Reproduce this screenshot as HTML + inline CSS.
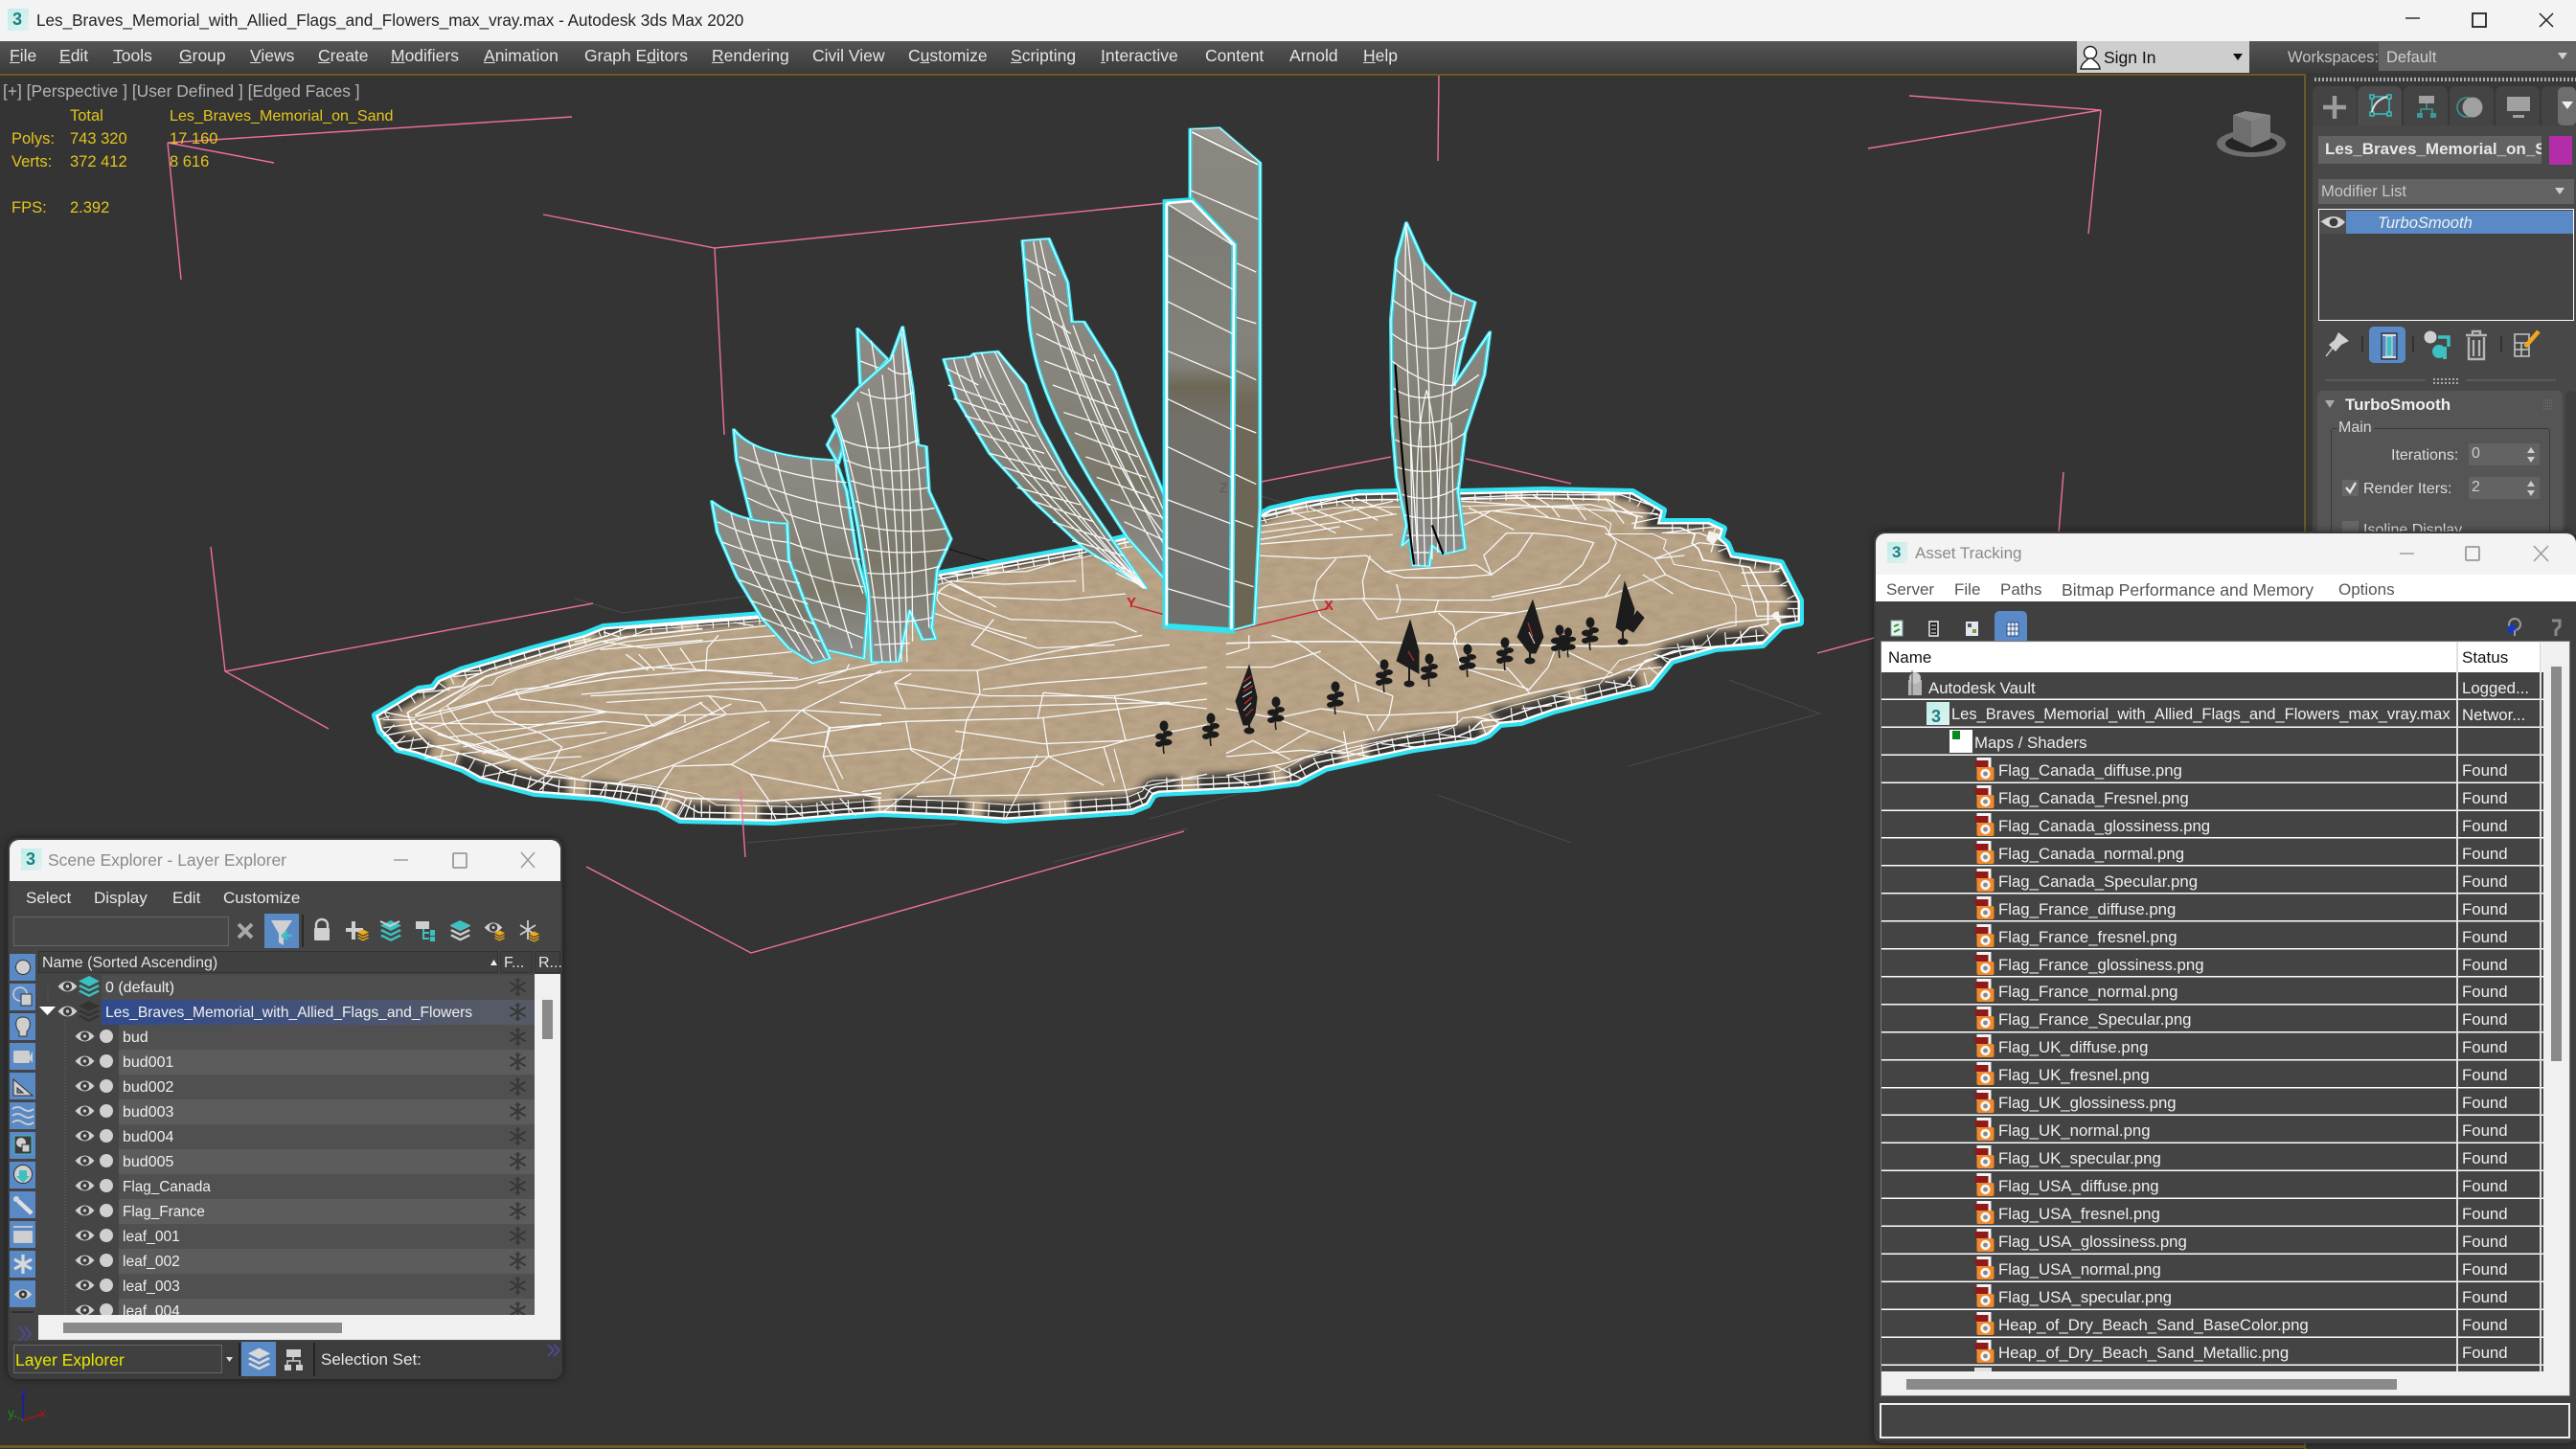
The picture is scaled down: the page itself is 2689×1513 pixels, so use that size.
<!DOCTYPE html>
<html><head><meta charset="utf-8"><title>Autodesk 3ds Max 2020</title>
<style>
html,body{margin:0;padding:0;background:#343434}
body{position:relative;width:2689px;height:1513px;overflow:hidden;font-family:"Liberation Sans",sans-serif;font-size:17px}
.L{position:absolute;left:0;top:0;width:2689px;height:1513px}
.b{position:absolute}
.t{position:absolute;white-space:nowrap;line-height:24px;height:24px}
svg.s3 *{vector-effect:non-scaling-stroke}
.c{fill:url(#lg);stroke:#2fe3f2;stroke-width:7;stroke-linejoin:round}
.w{fill:none;stroke:#fff;stroke-width:1.8;stroke-linejoin:round}
.m{fill:none;stroke:#f8f8f8;stroke-width:1.3}
.r{fill:none;stroke:#fff;stroke-width:1.3}
.m1 .t{color:#e4e4e4;top:46px;font-size:17.5px}
.st{color:#e3c51c;font-size:16.5px}
.vp{color:#b4b4b4;font-size:17.4px}
.ar{position:absolute;color:#f0f0f0;white-space:nowrap;font-size:16.8px;line-height:29px;height:29px;margin-top:1px}
.a{left:2086px}
.f{left:2570px}
.lr{position:absolute;color:#f0f0f0;white-space:nowrap;font-size:16px;line-height:26px;height:26px;left:128px;margin-top:1px}
</style></head><body>
<svg width="0" height="0" style="position:absolute">
<defs>
<linearGradient id="lg" x1="0" y1="0" x2="0" y2="1"><stop offset="0" stop-color="#8f8d86"/><stop offset=".45" stop-color="#85837a"/><stop offset=".7" stop-color="#7b786a"/><stop offset="1" stop-color="#8f8f8e"/></linearGradient>
<linearGradient id="ob" x1="0" y1="0" x2="0" y2="1"><stop offset="0" stop-color="#7b7a74"/><stop offset=".38" stop-color="#83827a"/><stop offset=".435" stop-color="#6d6756"/><stop offset=".5" stop-color="#73706a"/><stop offset="1" stop-color="#6f6f6d"/></linearGradient>
<linearGradient id="ob2" x1="0" y1="0" x2="0" y2="1"><stop offset="0" stop-color="#8a8880"/><stop offset=".45" stop-color="#83827a"/><stop offset=".55" stop-color="#6f6858"/><stop offset="1" stop-color="#6a6453"/></linearGradient>
<linearGradient id="tm" x1="0" y1="0" x2="1" y2="1"><stop offset="0" stop-color="#bfeee8"/><stop offset="1" stop-color="#e0f2f0"/></linearGradient>
<path id="isl" d="M630 655 796 642 977 600 1130 572 1176 561 1311 540 1326 532 1365 523 1418 515 1457 514 1525 514 1612 512 1704 514 1736 533 1733 545 1784 545 1799 552 1796 562 1803 568 1808 580 1859 588 1879 627 1879 650 1859 654 1840 673 1791 677 1745 690 1723 717 1622 742 1588 754 1566 756 1554 767 1539 773 1476 782 1384 802 1355 817 1311 823 1210 828 1204 830 1198 840 1181 847 1106 852 1049 856 994 852 920 849 877 852 808 858 710 856 687 843 627 833 558 828 501 813 483 803 435 787 415 782 397 763 392 747 437 720 452 718 458 710 481 700 555 678 610 663Z"/>
<clipPath id="ic"><use href="#isl"/></clipPath>
<filter id="bl" x="-5%" y="-5%" width="110%" height="110%"><feGaussianBlur stdDeviation="3.5"/></filter>
<filter id="nz" x="0" y="0" width="100%" height="100%"><feTurbulence type="fractalNoise" baseFrequency=".06 .14" numOctaves="3" seed="4"/><feColorMatrix type="matrix" values="0 0 0 0 .25  0 0 0 0 .18  0 0 0 0 .1  1.6 0 0 0 -.55"/></filter>
<symbol id="eye" viewBox="0 0 20 14"><path d="M0 7Q10-4 20 7 10 18 0 7Z" fill="#cfcfcf"/><circle cx="10" cy="7" r="4.6" fill="#3c3c3c"/><circle cx="10" cy="7" r="1.6" fill="#cfcfcf"/></symbol>
<symbol id="flk" viewBox="0 0 20 20"><g stroke="#383838" stroke-width="2.2" fill="none"><path d="M10 0V20M1.5 5 18.5 15M18.5 5 1.5 15"/><path d="M7 2l3 2 3-2M7 18l3-2 3 2" stroke-width="1.3"/></g></symbol>
<symbol id="png" viewBox="0 0 20 24"><rect x="2" y="0" width="15" height="12" fill="#f4f4f4"/><rect y="3" width="14" height="7" fill="#8e1a1a"/><rect x="2" y="10" width="18" height="14" rx="2" fill="#f0892a"/><circle cx="11" cy="17" r="5.2" fill="#f5f5f5"/><circle cx="11" cy="17" r="2.4" fill="#8a8a8a"/></symbol>
<symbol id="fl" viewBox="0 0 20 34"><path d="M10 6C11 16 8 24 10 34" stroke="#1b1b1b" stroke-width="1.6" fill="none"/><ellipse cx="10" cy="5" rx="4.5" ry="5.5" fill="#1b1b1b"/><ellipse cx="7" cy="16" rx="6" ry="3.5" fill="#1b1b1b"/><ellipse cx="14" cy="13" rx="5" ry="3" fill="#1b1b1b"/><ellipse cx="12" cy="22" rx="6.5" ry="3.5" fill="#1b1b1b"/><ellipse cx="5" cy="24" rx="4" ry="3" fill="#1b1b1b"/></symbol>
<symbol id="lay" viewBox="0 0 24 24"><path d="M12 0 24 6 12 12 0 6Z"/><path d="M2 10 12 15 22 10 24 12 12 18 0 12Z"/><path d="M2 16 12 21 22 16 24 18 12 24 0 18Z"/></symbol>
<path id="bA" d="M640 368 688 362 722 490 730 605 752 605 808 750 850 930 905 1140 905 1370 830 1235 770 1085C710 920 655 760 650 560Z"/>
<path id="bC" d="M497 715 545 707 552 698 595 692 645 788 670 900 720 1050 800 1235 865 1385 750 1265 660 1130 580 990 520 830Z"/>
<path id="ob1" d="M945 42 998 38 1072 140 1072 1150 1062 1490 1015 1510 945 250Z"/>
<path id="l1" d="M115 920C135 960 175 1000 300 1010L320 1100 340 1300 360 1420 352 1590 270 1560 200 1400 150 1200 120 1010Z"/>
<path id="l2" d="M75 1130C100 1160 130 1190 212 1195L215 1300 250 1450 290 1590 258 1604 215 1560 165 1470 120 1350 85 1220Z"/>
<path id="l0" d="M340 625 395 715 340 810 320 860 285 965 305 1020 345 790Z"/>
<path id="l3" d="M295 880 340 800 400 715 422 620 440 800 450 965 465 970 470 1100 510 1240 485 1330 475 1500 482 1532 458 1535 435 1450 415 1600 365 1600 360 1400 340 1200 310 950Z"/>
<path id="rl" d="M1338 315 1370 430 1420 520 1463 548 1440 680 1425 790 1490 635 1480 760 1445 930 1432 1100 1445 1270 1405 1285 1385 1260 1380 1320 1350 1318 1345 1240 1330 1260 1338 1200 1320 1060 1312 900 1310 600 1320 420Z"/>
</defs>
</svg>

<!-- 3D viewport -->
<svg class="L s3" viewBox="0 0 2689 1513" width="2689" height="1513" style="background:#343434">
<g stroke="#4a4a4a" stroke-width="1" fill="none">
<path d="M600 735 860 650M600 625 650 640 800 620M640 738 880 800M1000 600 1130 640M1200 555 1300 520M1290 510 1390 540M1700 800 1900 745 1805 710M1500 830 1640 880M1200 855 1430 790M780 880 1000 860M1100 900 1240 865"/>
</g>
<path d="M990 573 1039 588" stroke="#111" stroke-width="1" fill="none"/>
<g stroke="#ef6fa2" stroke-width="1.4" fill="none">
<path d="M175 149 597 122M175 149 286 170M175 149 189 292"/>
<path d="M567 224 746 259 1217 212M746 259 756 454"/>
<path d="M1993 100 2193 115 1950 155M2193 115 2180 244M2154 493 2149 557"/>
<path d="M1502 78 1501 168"/>
<path d="M220 571 235 701 343 761M235 701 619 630"/>
<path d="M612 905 784 995 1236 868"/>
<path d="M1897 682 1960 665M1311 504 1452 477M1530 479 1640 505"/>
</g>

<!-- island -->
<use href="#isl" fill="none" stroke="#2fe3f2" stroke-width="8" stroke-linejoin="round"/>
<use href="#isl" fill="#baa589"/>
<g clip-path="url(#ic)">
<rect x="380" y="500" width="1510" height="370" filter="url(#nz)" opacity=".28"/>
<use href="#isl" fill="none" stroke="#2b2a29" stroke-width="25" stroke-dasharray="75 22 120 30 60 18" filter="url(#bl)" transform="translate(0 -5)" opacity=".9"/>
<use href="#isl" fill="none" stroke="#f4f1ea" stroke-width="26" stroke-dasharray="1.2 15" transform="translate(0 -3)"/>
<use href="#isl" fill="none" stroke="#fff" stroke-width="5"/>
</g>
<g class="r">
<use href="#isl" class="r" style="stroke-width:1.7" transform="translate(1135 685) scale(.955) translate(-1135 -685)"/>
<use href="#isl" class="r" style="stroke-width:1" transform="translate(1135 685) scale(.91) translate(-1135 -685)"/>
<path class="r" style="stroke-width:1.1" d="M977 600 1040 634M1129 573 1131 618M1181 847 1163 782M1049 856 1083 788M920 849 1006 783"/>
</g>
<!-- left mesh traced -->
<g class="m" transform="translate(400 620) scale(.3333)">
<path style="stroke-width:1.8" d="M100 380 320 260 500 205 680 150 760 135 1000 110M100 400 170 435 300 490 420 520 510 570 680 590 840 610 950 640 1200 650 1560 625"/>
<path d="M100 385 320 335 520 295 720 265 1010 240 1300 265M110 395 420 310 620 260 830 230 1220 250M120 405 470 410 690 400 840 415M150 420 340 370 700 370 830 380 940 380 1080 378 1200 368 1320 365 1560 380M170 440 420 520 620 510M200 450 450 420 600 390 700 370M250 480 500 430 690 400M310 500 560 450 700 435"/>
<path d="M420 520 600 480 820 420 1000 340M510 565 700 510 900 440 1070 380M620 575 760 500 930 420 1090 345M740 590 900 540 1090 460 1210 400M860 610 910 540 1090 535 1210 460 1390 480 1440 580M1210 460 1310 365 1560 240M1090 535 1150 565 1210 650M1150 565 1390 610 1560 640M1210 460 1560 405M1400 420 1385 480M1310 365 1400 420 1560 410"/>
<path d="M820 380 845 415 920 380 945 380 945 405M320 335 415 300 520 290M415 300 430 330 600 350 700 370M200 350 320 260M200 350 250 420 420 520M320 335 350 380 500 440 560 480 510 570M1010 240 1015 170 1050 130M930 170 980 240M860 170 910 240M800 190 850 240M760 190 830 240"/>
<path d="M690 150 820 170 1000 150 1240 130M540 205 760 150 1200 100M680 175 1000 145M520 295 700 250 1000 210 1300 180M620 315 1050 280 1300 270 1560 215M650 320 1050 300 1290 295 1450 240 1460 220M700 340 1020 320 1180 340 1200 368M1075 378 1020 320M1040 380 990 340"/>
<path d="M680 630 700 590M720 640 740 590M760 650 790 600M835 665 860 610M870 670 890 615M920 695 950 640M945 700 965 645M997 700 997 645M1200 650 1230 705M1370 650 1410 695M1430 640 1480 695M1260 650 1310 695M50 490 240 470M130 515 340 490M300 575 420 550M320 540 400 520M0 370 100 390M0 395 100 395M0 420 110 405M0 445 130 420M480 175 530 160M600 150 650 140M690 120 740 135M220 260 300 250M240 245 310 240M110 310 210 300M20 470 120 455M450 610 510 570M490 615 530 575M1100 90 1160 100M900 100 960 90"/>
</g>
<!-- center mesh -->
<g class="m" transform="translate(360 500) scale(.574 .3333)">
<path d="M1000 640 1170 680 1400 680 1568 640M1020 720 1260 710 1500 700M1020 760 1260 750 1568 690M1150 600 1240 570 1500 520"/>
<path d="M1020 760 1030 850 1110 930 1100 990M1150 600 1155 670 1130 760 1120 860 1110 930M1270 750 1280 870 1260 900 1100 940 940 980M1260 750 1270 670M1030 845 1120 880 1280 870 1380 840 1400 950M1040 995 1260 990 1420 975 1568 925M1270 670 1420 690 1568 720"/>
<path d="M1100 330 1150 370 1300 380 1420 360M1070 350 1210 440 1400 450 1440 480M1070 420 1160 470 1260 530 1400 520M1100 330C1040 380 1100 440 1240 500M1180 440 1140 520 1210 570 1290 540 1450 490M1100 320 1200 330 1330 320M1090 300 1240 290 1340 240"/>
<path d="M860 640 1000 600 1150 600M1030 610 1000 640 1020 720M900 700 1020 720M880 780 1020 760M870 870 1030 845M880 780 870 870 900 980M1110 790 1270 830 1420 820 1568 770M1280 870 1380 960M1160 660 1260 640 1420 620 1568 590M1400 680 1420 820 1380 840"/>
</g>
<!-- right mesh traced -->
<g class="m" transform="translate(1280 500) scale(.3954 .3333)">
<path d="M80 205 240 190 440 175M80 150 250 120 440 70M620 60 800 50 1040 50 1140 90M620 110 790 90 960 80 1100 120M620 150 700 100 840 120 1000 150 1030 200 1010 260 930 330 700 380 550 380 360 375 230 380 80 405"/>
<path d="M470 310 610 310 700 300 770 240 810 170M420 290 530 280 660 270 700 300 680 240 740 170 810 170 900 180 970 200 940 270 880 330 700 370M80 240 250 250 370 240 420 290 470 310M230 380 240 320 290 250M230 380 250 430 350 510 420 600M360 375 400 440 560 415 760 420 1000 370 1160 300 1130 250 1000 170M560 380 550 420M450 330 460 380 450 420M380 240 360 320 365 375"/>
<path d="M560 420 600 460 610 520M760 420 670 440 610 480 600 510 620 590 740 600M1160 300 1230 340 1390 380 1400 430M1390 380 1360 270M1000 370 1040 300M1100 300 1180 360M810 50 860 90 880 120M1000 60 1050 140M1250 200 1130 250 1210 240"/>
<path style="stroke-width:1.6" d="M0 515 180 510 330 510 520 515 760 520 1000 525 1110 520 1330 450 1510 430"/>
<path d="M0 590 120 590 250 540M120 490 190 515 330 630 440 680M60 490 60 530 0 550M440 680 430 740 400 790M340 640 350 700M250 720 370 740 430 740 610 730M610 730 610 770M620 590 800 660 850 590 870 530M740 590 800 670M880 530 1020 610"/>
<path d="M130 750 220 790 320 830M0 720 130 750 250 720M320 830 440 800 610 770M0 870 200 850 310 860 430 820 610 770M0 930 160 890 320 830M70 820 0 860M70 820 170 880M310 790 320 860M220 790 120 860M370 740 390 790"/>
<path style="stroke-width:1.6" d="M610 730 810 670 1010 620 1180 540 1420 510"/>
<path d="M640 790 720 770M560 800 660 815M410 830 500 840M280 850 380 870M130 900 200 940M20 935 60 960M780 720 860 710M650 745 720 760M860 680 950 690M1000 635 1080 650M1060 600 1150 590M1130 550 1170 565M1200 525 1290 530M1320 500 1420 490M1400 430 1510 430M1390 385 1510 385M1360 335 1480 335M1360 295 1460 290M1250 200 1320 210M1150 170 1290 150"/>
<path d="M100 120 300 60M80 170 330 130 450 110M170 100 290 170M220 90 360 160M300 70 400 130M340 60 440 110M90 190 300 150M620 70 1140 110M1070 140 1150 120M760 50 850 120M900 50 950 130M640 90 760 160M1160 170 1250 170 1290 190 1280 230"/>
</g>
<path d="M773 825 778 895" stroke="#ef6fa2" stroke-width="1.4" fill="none"/>

<!-- flowers and trees -->
<g>
<use href="#fl" x="1205" y="752" width="20" height="36"/>
<use href="#fl" x="1254" y="744" width="20" height="36"/>
<use href="#fl" x="1322" y="727" width="20" height="36"/>
<use href="#fl" x="1384" y="711" width="20" height="36"/>
<use href="#fl" x="1435" y="688" width="20" height="36"/>
<use href="#fl" x="1482" y="682" width="20" height="36"/>
<use href="#fl" x="1522" y="672" width="20" height="36"/>
<use href="#fl" x="1561" y="665" width="20" height="36"/>
<use href="#fl" x="1618" y="652" width="20" height="36"/>
<use href="#fl" x="1628" y="654" width="18" height="34"/>
<use href="#fl" x="1650" y="644" width="20" height="36"/>
</g>
<g fill="#1c1c1c" stroke="#1c1c1c">
<path d="M1304 695 1312 728 1310 745 1304 757 1298 757 1290 732Z"/><path d="M1304 755V762" stroke-width="2"/><ellipse cx="1304" cy="763" rx="5" ry="3"/>
<path d="M1472 648 1458 690 1481 703 1481 680Z"/><path d="M1471 690V713" stroke-width="2"/><ellipse cx="1471" cy="714" rx="5" ry="3"/>
<path d="M1600 627 1584 665 1597 682 1603 682 1611 665Z"/><path d="M1597 680V688" stroke-width="2"/><ellipse cx="1597" cy="690" rx="5" ry="3"/>
<path d="M1696 608 1687 655 1694 660 1704 650 1706 636Z"/><path d="M1694 658V669" stroke-width="2"/><ellipse cx="1694" cy="670" rx="5" ry="3"/>
<path d="M1709 638 1716 645 1705 660 1698 656Z"/>
</g>
<g stroke="#c03030" stroke-width="1.2" fill="none"><path d="M1298 712 1306 706M1298 722 1308 716M1299 735 1307 728M1300 748 1308 740M1470 680 1476 690M1595 650 1600 665"/></g>
<g stroke="#dddddd" stroke-width="1.1" fill="none"><path d="M1298 718 1306 712M1297 728 1307 722M1298 742 1306 734M1596 660 1602 672"/></g>

<!-- axis gizmo -->
<path d="M1183 633 1283 660 1387 635" stroke="#d01f2a" stroke-width="1.4" fill="none"/>
<path d="M1279 510V660" stroke="#5a5a5a" stroke-width="1"/>

<!-- blades center -->
<g transform="translate(700 120) scale(.574 .357)">
<use href="#bA" class="c"/>
<g class="m"><path d="M660 370C680 600 760 950 905 1330M672 366C700 600 790 950 905 1280M712 615C760 850 830 1100 905 1240M732 615C780 830 850 1060 905 1210M770 700C820 900 870 1050 905 1190"/>
<path d="M645 420 700 470M648 480 722 560M655 560 728 640M665 640 770 720M680 720 800 790M695 790 815 860M715 870 830 930M735 930 850 1000M755 1000 865 1060M775 1060 880 1120M800 1125 900 1180M825 1190 905 1250"/></g>
<use href="#bA" class="w"/>
<use href="#bC" class="c"/>
<g class="m"><path d="M515 715C540 880 640 1100 860 1385M535 712C570 900 670 1120 862 1385M565 695C610 880 690 1100 864 1385M590 695C640 860 720 1120 865 1385M555 705C600 880 680 1100 860 1380"/>
<path d="M500 740 560 790M505 790 610 850M515 830 650 900M535 880 665 940M555 930 680 990M580 990 700 1040M605 1030 720 1090M630 1090 745 1140M660 1130 770 1190M695 1190 800 1245M730 1245 825 1290M770 1290 845 1340M810 1340 860 1380M552 698 565 770M595 692 645 788"/></g>
<use href="#bC" class="w"/>
</g>

<!-- obelisk -->
<g transform="translate(700 120) scale(.574 .357)">
<use href="#ob1" fill="url(#ob2)" stroke="#2fe3f2" stroke-width="7"/>
<path d="M945 42 998 38 1072 140Z" fill="#9a9890"/>
<path d="M948 50 1068 145" stroke="#fff" stroke-width="1.6" fill="none"/>
<g class="m"><path d="M945 220 1068 305M1025 430 1065 460M1025 590 1065 610M1025 745 1065 775M1025 905 1065 930M1025 1050 1065 1080M1025 1185 1060 1205M1020 1360 1060 1380"/></g>
<use href="#ob1" class="w"/>
<path d="M900 255 948 250 1025 380 1020 1508 900 1495Z" fill="url(#ob)" stroke="#2fe3f2" stroke-width="6"/>
<path d="M903 258 948 252 1025 380Z" fill="#a09e97"/>
<g class="m"><path d="M903 260 1022 380M903 410 1022 510M903 545 1022 640M903 690 1022 770M903 830 1020 920M903 970 1020 1060M903 1125 1018 1195M903 1265 1018 1330M903 1385 1018 1440"/></g>
<path d="M902 258 948 252 1025 380 1020 1505" fill="none" stroke="#fff" stroke-width="2.6"/>
<path d="M902 258V1495" fill="none" stroke="#fff" stroke-width="2.6"/>
<path d="M900 1497 1015 1510" fill="none" stroke="#2fe3f2" stroke-width="3"/>
</g>

<!-- left leaves -->
<g transform="translate(700 120) scale(.574 .357)">
<use href="#l1" class="c"/>
<g class="m"><path d="M125 1000Q220 1060 320 1075M132 1060Q230 1130 330 1150M140 1120Q230 1190 335 1215M215 1250Q280 1290 345 1300M225 1330Q290 1370 350 1380M240 1410Q300 1440 355 1460M255 1470 350 1530M150 965Q170 1100 215 1195M190 990Q220 1200 290 1500M255 1005Q270 1250 330 1560M300 1010Q305 1200 350 1400"/></g>
<use href="#l1" class="w"/>
<use href="#l2" class="c"/>
<g class="m"><path d="M85 1190Q150 1240 213 1250M95 1250Q160 1290 220 1310M110 1310Q170 1350 235 1370M125 1360Q190 1400 250 1430M145 1420Q200 1450 262 1490M165 1470Q210 1500 272 1540M110 1165Q130 1320 235 1568M140 1178Q165 1350 258 1590M178 1190Q190 1350 280 1590"/></g>
<use href="#l2" class="w"/>
<use href="#l0" class="c"/>
<path d="M365 660 375 760M345 720 395 750" class="m"/>
<use href="#l0" class="w"/>
<use href="#l3" class="c"/>
<g class="m"><path d="M300 885Q350 1100 385 1600M340 840Q380 1100 400 1600M385 760Q410 1100 420 1600M420 640Q440 1100 440 1540M422 620Q455 1000 470 1500M360 800Q395 1100 410 1600M405 700Q425 1100 430 1600"/>
<path d="M312 950Q380 1000 452 950M320 1010Q390 1060 465 1030M328 1070Q400 1110 470 1090M336 1130Q410 1170 480 1150M345 1200Q420 1230 500 1210M352 1270Q420 1290 505 1270M358 1340Q420 1350 490 1320M365 1410Q420 1420 480 1400M370 1480Q420 1490 478 1470M345 810Q400 850 442 810M395 740Q420 770 438 750M370 1550 435 1545"/></g>
<use href="#l3" class="w"/>
</g>

<!-- right leaves -->
<g transform="translate(700 120) scale(.574 .357)">
<use href="#rl" class="c"/>
<g class="m"><path d="M1338 315Q1330 600 1360 1318M1338 330Q1360 600 1372 1320M1370 430Q1380 700 1385 1300M1420 520Q1400 800 1395 1280M1445 540Q1410 800 1410 1280M1345 900 1350 1310M1420 900 1425 1280"/>
<path d="M1318 450Q1370 530 1440 560M1312 540Q1380 620 1452 600M1312 640Q1380 720 1445 650M1312 720Q1380 800 1428 790M1315 800Q1380 870 1470 760M1315 880Q1380 930 1450 860M1318 950Q1380 1000 1445 930M1320 1030Q1380 1060 1435 1020M1330 1110Q1380 1140 1432 1090M1335 1170Q1380 1190 1432 1170M1338 1230 1440 1230M1350 1280 1380 1280"/>
<path d="M1375 805Q1350 950 1360 1300M1375 805Q1400 950 1395 1280"/></g>
<use href="#rl" class="w"/>
<path d="M1318 730C1325 900 1335 1120 1352 1315" stroke="#000" stroke-width="2.2" fill="none"/>
<path d="M1385 1200 1405 1285" stroke="#000" stroke-width="2.2" fill="none"/>
</g>

<!-- nav cube -->
<ellipse cx="2350" cy="150" rx="36" ry="14" fill="#6f6f6f"/>
<ellipse cx="2350" cy="150" rx="27" ry="9" fill="#252525"/>
<path d="M2331 120 2344 116 2370 120 2350 127Z" fill="#848484"/>
<path d="M2331 120 2350 127V154L2331 145Z" fill="#6e6e6e"/>
<path d="M2350 127 2370 120V145L2350 154Z" fill="#7c7c7c"/>

<!-- tripod -->
<path d="M24 1483V1456" stroke="#1a1ab0" stroke-width="1.5"/>
<path d="M24 1483 46 1476" stroke="#a01818" stroke-width="1.5"/>
<path d="M24 1483 12 1477" stroke="#1c8a1c" stroke-width="1.5" stroke-dasharray="2 2"/>
<rect x="0" y="77" width="2407" height="2" fill="#6c5a24"/>
<rect x="2405" y="77" width="2" height="1436" fill="#6c5a24"/>
<rect x="0" y="1509" width="2407" height="3" fill="#6c5a24"/>
</svg>
<div class="t" style="left:1176px;top:618px;color:#c8202a;font-size:15px;font-weight:bold">Y</div>
<div class="t" style="left:1382px;top:621px;color:#c8202a;font-size:15px;font-weight:bold">X</div>
<div class="t" style="left:1273px;top:497px;color:#5c5c5c;font-size:14px">Z</div>
<div class="t" style="left:21px;top:1443px;color:#1a1ab0;font-size:14px">z</div>
<div class="t" style="left:8px;top:1463px;color:#1c8a1c;font-size:14px">y</div>
<div class="t" style="left:41px;top:1463px;color:#a01818;font-size:14px">x</div>

<!-- title bar -->
<div class="b" style="left:0;top:0;width:2689px;height:43px;background:#f3f3f3"></div>
<svg class="L" viewBox="0 0 2689 44" style="height:44px;width:2689px">
<rect x="8" y="9" width="22" height="23" fill="url(#tm)"/>
<path d="M2511 19H2526" stroke="#222" stroke-width="1.4"/>
<rect x="2581" y="14" width="14" height="14" fill="none" stroke="#222" stroke-width="1.8"/>
<path d="M2651 14 2665 28M2665 14 2651 28" stroke="#222" stroke-width="1.5"/>
</svg>
<div class="t" style="left:13px;top:8px;color:#1d7f86;font-weight:bold;font-size:18px">3</div>
<div class="t" style="left:38px;top:9px;font-size:17.14px;color:#222">Les_Braves_Memorial_with_Allied_Flags_and_Flowers_max_vray.max - Autodesk 3ds Max 2020</div>

<!-- menu bar -->
<div class="b" style="left:0;top:43px;width:2689px;height:34px;background:linear-gradient(#555,#3a3a3a)"></div>
<div class="m1">
<div class="t" style="left:10px"><u>F</u>ile</div>
<div class="t" style="left:62px"><u>E</u>dit</div>
<div class="t" style="left:118px"><u>T</u>ools</div>
<div class="t" style="left:187px"><u>G</u>roup</div>
<div class="t" style="left:261px"><u>V</u>iews</div>
<div class="t" style="left:332px"><u>C</u>reate</div>
<div class="t" style="left:408px"><u>M</u>odifiers</div>
<div class="t" style="left:505px"><u>A</u>nimation</div>
<div class="t" style="left:610px">Graph E<u>d</u>itors</div>
<div class="t" style="left:743px"><u>R</u>endering</div>
<div class="t" style="left:848px">Civil View</div>
<div class="t" style="left:948px">C<u>u</u>stomize</div>
<div class="t" style="left:1055px"><u>S</u>cripting</div>
<div class="t" style="left:1149px"><u>I</u>nteractive</div>
<div class="t" style="left:1258px">Content</div>
<div class="t" style="left:1346px">Arnold</div>
<div class="t" style="left:1423px"><u>H</u>elp</div>
</div>
<div class="b" style="left:2168px;top:43px;width:180px;height:33px;background:#cecece"></div>
<svg class="b" style="left:2170px;top:46px" width="24" height="28" viewBox="0 0 24 28"><circle cx="12" cy="9" r="6.5" fill="#fff" stroke="#222" stroke-width="1.5"/><path d="M2 26C3 19 8 18 10 15H14C16 18 21 19 22 26Z" fill="#fff" stroke="#222" stroke-width="1.5"/></svg>
<div class="t" style="left:2196px;top:48px;color:#111;font-size:17.5px">Sign In</div>
<div class="b" style="left:2331px;top:56px;width:0;height:0;border-left:5px solid transparent;border-right:5px solid transparent;border-top:7px solid #111"></div>
<div class="t" style="left:2388px;top:48px;color:#c4c4c4;font-size:16.5px">Workspaces:</div>
<div class="b" style="left:2483px;top:44px;width:206px;height:30px;background:#646464"></div>
<div class="t" style="left:2491px;top:48px;color:#cfcfcf;font-size:16.5px">Default</div>
<div class="b" style="left:2670px;top:55px;width:0;height:0;border-left:5px solid transparent;border-right:5px solid transparent;border-top:7px solid #d0d0d0"></div>

<!-- viewport text -->
<div class="t vp" style="left:3px;top:83px">[+] [Perspective ] [User Defined ] [Edged Faces ]</div>
<div class="t st" style="left:73px;top:109px">Total</div>
<div class="t st" style="left:177px;top:109px;font-size:16.1px">Les_Braves_Memorial_on_Sand</div>
<div class="t st" style="left:12px;top:133px">Polys:</div>
<div class="t st" style="left:73px;top:133px">743 320</div>
<div class="t st" style="left:177px;top:133px">17 160</div>
<div class="t st" style="left:12px;top:157px">Verts:</div>
<div class="t st" style="left:73px;top:157px">372 412</div>
<div class="t st" style="left:177px;top:157px">8 616</div>
<div class="t st" style="left:12px;top:205px">FPS:</div>
<div class="t st" style="left:73px;top:205px">2.392</div>

<!-- right command panel -->
<div class="L" style="clip-path:inset(78px 0 953px 2407px)">
<div class="b" style="left:2407px;top:78px;width:282px;height:480px;background:#383838"></div>
<div class="b" style="left:2416px;top:81px;width:273px;height:4px;background:repeating-linear-gradient(90deg,#aaa 0,#aaa 2px,#383838 2px,#383838 4px)"></div>
<div class="b" style="left:2414px;top:90px;width:46px;height:41px;background:#444;border-radius:7px 7px 0 0"></div>
<div class="b" style="left:2461px;top:90px;width:46px;height:41px;background:#4c4c4c;border-radius:7px 7px 0 0"></div>
<div class="b" style="left:2509px;top:90px;width:46px;height:41px;background:#444;border-radius:7px 7px 0 0"></div>
<div class="b" style="left:2557px;top:90px;width:46px;height:41px;background:#444;border-radius:7px 7px 0 0"></div>
<div class="b" style="left:2605px;top:90px;width:46px;height:41px;background:#444;border-radius:7px 7px 0 0"></div>
<div class="b" style="left:2653px;top:90px;width:36px;height:41px;background:#444;border-radius:7px 7px 0 0"></div>
<div class="b" style="left:2670px;top:91px;width:19px;height:40px;background:#6e6e6e;border-radius:5px"></div>
<div class="b" style="left:2414px;top:131px;width:275px;height:427px;background:#484848"></div>
<div class="b" style="left:2420px;top:142px;width:233px;height:29px;background:#636363;overflow:hidden"><div class="t" style="left:7px;top:2px;color:#e8e8e8;font-weight:bold;font-size:17px">Les_Braves_Memorial_on_Sand</div></div>
<div class="b" style="left:2661px;top:142px;width:24px;height:30px;background:#b42da8"></div>
<div class="b" style="left:2420px;top:187px;width:267px;height:26px;background:#636363"></div>
<div class="t" style="left:2423px;top:188px;color:#c8c8c8;font-size:16.5px">Modifier List</div>
<div class="b" style="left:2667px;top:196px;width:0;height:0;border-left:5px solid transparent;border-right:5px solid transparent;border-top:7px solid #d0d0d0"></div>
<div class="b" style="left:2420px;top:218px;width:265px;height:115px;background:#444;border:1.5px solid #fff"></div>
<div class="b" style="left:2422px;top:220px;width:27px;height:24px;background:#4e4e4e"></div>
<div class="b" style="left:2449px;top:220px;width:237px;height:24px;background:#5a8ac6"></div>
<div class="t" style="left:2482px;top:221px;color:#f0f0f0;font-style:italic;font-size:16.5px">TurboSmooth</div>
<div class="b" style="left:2473px;top:341px;width:38px;height:38px;background:#5a8ac6;border-radius:5px"></div>
<div class="b" style="left:2419px;top:408px;width:256px;height:150px;background:#555;border-radius:5px 5px 0 0"></div>
<div class="b" style="left:2678px;top:408px;width:11px;height:150px;background:#404040;border-radius:5px"></div>
<div class="b" style="left:2433px;top:447px;width:227px;height:120px;border:1.5px solid #3a3a3a;border-radius:3px"></div>
<div class="b" style="left:2440px;top:438px;width:38px;height:18px;background:#555"></div>
<div class="b" style="left:2577px;top:463px;width:74px;height:23px;background:#636363"></div>
<div class="b" style="left:2577px;top:498px;width:74px;height:23px;background:#636363"></div>
<div class="b" style="left:2445px;top:501px;width:17px;height:17px;background:#666"></div>
<div class="b" style="left:2445px;top:544px;width:17px;height:17px;background:#666"></div>
<svg class="L" viewBox="0 0 2689 1513" width="2689" height="1513">
<path d="M2425 112H2449M2437 100V124" stroke="#9c9c9c" stroke-width="4.5"/>
<g fill="none" stroke="#3cc0c0" stroke-width="1.5"><rect x="2474" y="99" width="4" height="4"/><rect x="2492" y="99" width="4" height="4"/><rect x="2474" y="117" width="4" height="4"/><rect x="2492" y="117" width="4" height="4"/><path d="M2478 101H2492M2478 119H2492M2476 103V117M2494 103V117"/></g>
<path d="M2476 117C2478 108 2484 103 2492 101" stroke="#ddd" stroke-width="2" fill="none"/>
<rect x="2525" y="100" width="16" height="8" fill="#a0a0a0"/><path d="M2533 108V114M2527 118V114H2539V118" stroke="#3a9a9a" stroke-width="1.6" fill="none"/><rect x="2523" y="118" width="6" height="5" fill="#3a9a9a"/><rect x="2537" y="118" width="6" height="5" fill="#3a9a9a"/>
<circle cx="2575" cy="112" r="10" fill="none" stroke="#3a9a9a" stroke-width="1.5"/><circle cx="2581" cy="112" r="10.5" fill="#a0a0a0"/>
<rect x="2617" y="101" width="24" height="15" fill="#a0a0a0"/><rect x="2623" y="120" width="12" height="3" fill="#a0a0a0"/>
<path d="M2674 106H2686L2680 114Z" fill="#f0f0f0"/>
<path d="M2422 232Q2437 220 2448 232 2437 244 2424 232Z" fill="#d4d4d4"/><circle cx="2436" cy="232" r="4.4" fill="#3c3c3c"/>
<path d="M2428 372 2436 362" stroke="#c0c0c0" stroke-width="1.6"/><path d="M2441 347 2452 356 2444 360 2438 367 2431 360 2437 355Z" fill="#d0d0d0"/>
<path d="M2466 351V368M2519 351V368M2611 351V368" stroke="#2a2a2a" stroke-width="1.5"/>
<rect x="2486" y="348" width="16" height="27" fill="none" stroke="#2a2a2a" stroke-width="1.2"/><rect x="2491" y="351" width="6" height="21" fill="#3cc0c0" stroke="#ddd" stroke-width="1"/><path d="M2487 350H2501M2487 373H2501" stroke="#ddd" stroke-width="2"/>
<circle cx="2537" cy="352" r="6.5" fill="#cfcfcf"/><path d="M2545 352H2556V362" fill="none" stroke="#3cc0c0" stroke-width="3.5"/><circle cx="2546" cy="367" r="7" fill="#3cc0c0"/><path d="M2552 362V375" stroke="#3cc0c0" stroke-width="4"/>
<path d="M2574 350H2596M2581 350V346H2589V350M2577 352V375H2593V352M2582 355V372M2588 355V372" fill="none" stroke="#b4b4b4" stroke-width="2.4"/>
<path d="M2625 349H2640V372H2625ZM2625 358H2640M2625 365H2640M2632 358V372" fill="none" stroke="#c4c4c4" stroke-width="1.6"/><path d="M2636 362 2650 346" stroke="#f0a818" stroke-width="4.5"/>
<path d="M2427 397H2532M2574 397H2668" stroke="#606060" stroke-width="1.5"/>
<path d="M2540 396H2566M2540 400H2566" stroke="#c8c8c8" stroke-width="1.6" stroke-dasharray="2 2"/>
<path d="M2427 418H2437L2432 426Z" fill="#aaa"/>
<path d="M2655 418H2664M2655 421H2664M2655 424H2664M2655 427H2664" stroke="#777" stroke-width="1" stroke-dasharray="1 1"/>
<path d="M2638 473 2642 467 2646 473ZM2638 477 2642 483 2646 477Z" fill="#ccc"/>
<path d="M2638 508 2642 502 2646 508ZM2638 512 2642 518 2646 512Z" fill="#ccc"/>
<path d="M2449 509 2453 514 2459 504" stroke="#e4e4e4" stroke-width="2.4" fill="none"/>
</svg>
<div class="t" style="left:2448px;top:411px;color:#f0f0f0;font-weight:bold;font-size:17px">TurboSmooth</div>
<div class="t" style="left:2441px;top:435px;color:#d8d8d8;font-size:16px">Main</div>
<div class="t" style="left:2496px;top:464px;color:#dcdcdc;font-size:16px">Iterations:</div>
<div class="t" style="left:2580px;top:462px;color:#ccc;font-size:16px">0</div>
<div class="t" style="left:2467px;top:499px;color:#dcdcdc;font-size:16px">Render Iters:</div>
<div class="t" style="left:2580px;top:497px;color:#ccc;font-size:16px">2</div>
<div class="t" style="left:2467px;top:542px;color:#dcdcdc;font-size:16px">Isoline Display</div>
</div>

<!-- Asset Tracking window -->
<div class="L">
<div class="b" style="left:1956px;top:555px;width:733px;height:952px;background:#3a3a3a;border-radius:10px 10px 10px 10px;box-shadow:0 0 8px rgba(0,0,0,.5)"></div>
<div class="b" style="left:1958px;top:557px;width:731px;height:43px;background:#f3f3f3;border-radius:10px 10px 0 0"></div>
<div class="b" style="left:1958px;top:600px;width:731px;height:28px;background:#fff"></div>
<div class="b" style="left:1958px;top:628px;width:731px;height:876px;background:#404040"></div>
<div class="b" style="left:2082px;top:638px;width:34px;height:31px;background:#5a8ac6;border-radius:5px 5px 0 0"></div>
<div class="b" style="left:1963px;top:669px;width:720px;height:789px;background:#f0f0f0;border:1px solid #777;box-sizing:border-box"></div>
<div class="b" style="left:1964px;top:671px;width:690px;height:31px;background:#fff"></div>
<div class="b" style="left:1964px;top:702px;width:691px;height:730px;background:repeating-linear-gradient(to bottom,#444 0,#444 27.45px,#fff 27.45px,#fff 28.95px)"></div>
<div class="b" style="left:2564px;top:671px;width:1.5px;height:761px;background:#e0e0e0"></div>
<div class="b" style="left:2651px;top:671px;width:1.5px;height:761px;background:#e0e0e0"></div>
<div class="b" style="left:2663px;top:696px;width:11px;height:412px;background:#8a8a8a"></div>
<div class="b" style="left:1990px;top:1440px;width:512px;height:11px;background:#8a8a8a"></div>
<div class="b" style="left:1962px;top:1465px;width:717px;height:33px;background:#444;border:2px solid #f0f0f0"></div>
<svg class="L" viewBox="0 0 2689 1513" width="2689" height="1513">
<path d="M2505 578H2520" stroke="#9a9a9a" stroke-width="1.4"/>
<rect x="2574" y="571" width="14" height="14" rx="1" fill="none" stroke="#9a9a9a" stroke-width="1.8"/>
<path d="M2645 570 2660 586M2660 570 2645 586" stroke="#9a9a9a" stroke-width="1.5"/>
<rect x="1970" y="566" width="21" height="22" fill="url(#tm)"/>
<rect x="1974" y="648" width="12" height="16" fill="#f0f0f0" stroke="#7aa" stroke-width="1"/><path d="M1977 654 1982 652M1977 660 1983 657" stroke="#1c9a2c" stroke-width="2"/>
<rect x="2014" y="649" width="9" height="15" fill="#222" stroke="#eee" stroke-width="1.5"/><path d="M2016 653H2021M2016 657H2021M2016 661H2021" stroke="#eee" stroke-width="1"/>
<rect x="2052" y="649" width="13" height="15" fill="#dfe8f0"/><rect x="2054" y="651" width="4" height="4" fill="#556"/><rect x="2059" y="657" width="4" height="4" fill="#9a8a30"/>
<rect x="2095" y="650" width="12" height="14" fill="#f4f4f4" stroke="#2c4f8c" stroke-width="1"/><path d="M2095 654H2107M2095 659H2107M2099 650V664M2103 650V664" stroke="#2c4f8c" stroke-width="1"/>
<circle cx="2625" cy="652" r="6" fill="none" stroke="#999" stroke-width="2"/><circle cx="2622" cy="657" r="4.5" fill="#1438c8"/><path d="M2625 658V664" stroke="#999" stroke-width="2"/>
<path d="M2664 648H2672V654L2668 658V664" fill="none" stroke="#888" stroke-width="3"/>
<path d="M1992 710H2006V726H1992Z" fill="#b4b4b4"/><circle cx="1999" cy="708" r="6" fill="#c8c8c8"/><path d="M1996 700V728" stroke="#555" stroke-width="1"/>
<rect x="2011" y="733" width="24" height="24" fill="url(#tm)"/>
<rect x="2035" y="762" width="24" height="24" fill="#fff"/><rect x="2038" y="763" width="8" height="9" fill="#0a8a1c"/>
<use href="#png" x="2061" y="791" width="21" height="24"/><use href="#png" x="2061" y="820" width="21" height="24"/><use href="#png" x="2061" y="849" width="21" height="24"/><use href="#png" x="2061" y="878" width="21" height="24"/><use href="#png" x="2061" y="907" width="21" height="24"/><use href="#png" x="2061" y="936" width="21" height="24"/><use href="#png" x="2061" y="965" width="21" height="24"/><use href="#png" x="2061" y="994" width="21" height="24"/><use href="#png" x="2061" y="1022" width="21" height="24"/><use href="#png" x="2061" y="1051" width="21" height="24"/><use href="#png" x="2061" y="1080" width="21" height="24"/><use href="#png" x="2061" y="1109" width="21" height="24"/><use href="#png" x="2061" y="1138" width="21" height="24"/><use href="#png" x="2061" y="1167" width="21" height="24"/><use href="#png" x="2061" y="1196" width="21" height="24"/><use href="#png" x="2061" y="1225" width="21" height="24"/><use href="#png" x="2061" y="1254" width="21" height="24"/><use href="#png" x="2061" y="1283" width="21" height="24"/><use href="#png" x="2061" y="1312" width="21" height="24"/><use href="#png" x="2061" y="1341" width="21" height="24"/><use href="#png" x="2061" y="1370" width="21" height="24"/><use href="#png" x="2061" y="1399" width="21" height="24"/>
<rect x="2061" y="1428" width="18" height="4" fill="#e0e0e0"/>
</svg>
<div class="t" style="left:1975px;top:565px;color:#1d7f86;font-weight:bold;font-size:17px">3</div>
<div class="t" style="left:2016px;top:736px;color:#1d7f86;font-weight:bold;font-size:18px">3</div>
<div class="t" style="left:1999px;top:566px;color:#8a8a8a;font-size:17px">Asset Tracking</div>
<div class="t" style="left:1969px;top:604px;color:#555;font-size:17px">Server</div>
<div class="t" style="left:2040px;top:604px;color:#555;font-size:17px">File</div>
<div class="t" style="left:2088px;top:604px;color:#555;font-size:17px">Paths</div>
<div class="t" style="left:2152px;top:604px;color:#555;font-size:17.6px">Bitmap Performance and Memory</div>
<div class="t" style="left:2441px;top:604px;color:#555;font-size:17px">Options</div>
<div class="t" style="left:1971px;top:675px;color:#111;font-size:17px">Name</div>
<div class="t" style="left:2570px;top:675px;color:#111;font-size:17px">Status</div>
<div class="ar" style="left:2013px;top:703px">Autodesk Vault</div><div class="ar f" style="top:703px">Logged...</div>
<div class="ar" style="left:2037px;top:731px;font-size:16.5px">Les_Braves_Memorial_with_Allied_Flags_and_Flowers_max_vray.max</div><div class="ar f" style="top:731px">Networ...</div>
<div class="ar" style="left:2061px;top:760px">Maps / Shaders</div>
<div class="ar a" style="top:789px">Flag_Canada_diffuse.png</div><div class="ar f" style="top:789px">Found</div>
<div class="ar a" style="top:818px">Flag_Canada_Fresnel.png</div><div class="ar f" style="top:818px">Found</div>
<div class="ar a" style="top:847px">Flag_Canada_glossiness.png</div><div class="ar f" style="top:847px">Found</div>
<div class="ar a" style="top:876px">Flag_Canada_normal.png</div><div class="ar f" style="top:876px">Found</div>
<div class="ar a" style="top:905px">Flag_Canada_Specular.png</div><div class="ar f" style="top:905px">Found</div>
<div class="ar a" style="top:934px">Flag_France_diffuse.png</div><div class="ar f" style="top:934px">Found</div>
<div class="ar a" style="top:963px">Flag_France_fresnel.png</div><div class="ar f" style="top:963px">Found</div>
<div class="ar a" style="top:992px">Flag_France_glossiness.png</div><div class="ar f" style="top:992px">Found</div>
<div class="ar a" style="top:1020px">Flag_France_normal.png</div><div class="ar f" style="top:1020px">Found</div>
<div class="ar a" style="top:1049px">Flag_France_Specular.png</div><div class="ar f" style="top:1049px">Found</div>
<div class="ar a" style="top:1078px">Flag_UK_diffuse.png</div><div class="ar f" style="top:1078px">Found</div>
<div class="ar a" style="top:1107px">Flag_UK_fresnel.png</div><div class="ar f" style="top:1107px">Found</div>
<div class="ar a" style="top:1136px">Flag_UK_glossiness.png</div><div class="ar f" style="top:1136px">Found</div>
<div class="ar a" style="top:1165px">Flag_UK_normal.png</div><div class="ar f" style="top:1165px">Found</div>
<div class="ar a" style="top:1194px">Flag_UK_specular.png</div><div class="ar f" style="top:1194px">Found</div>
<div class="ar a" style="top:1223px">Flag_USA_diffuse.png</div><div class="ar f" style="top:1223px">Found</div>
<div class="ar a" style="top:1252px">Flag_USA_fresnel.png</div><div class="ar f" style="top:1252px">Found</div>
<div class="ar a" style="top:1281px">Flag_USA_glossiness.png</div><div class="ar f" style="top:1281px">Found</div>
<div class="ar a" style="top:1310px">Flag_USA_normal.png</div><div class="ar f" style="top:1310px">Found</div>
<div class="ar a" style="top:1339px">Flag_USA_specular.png</div><div class="ar f" style="top:1339px">Found</div>
<div class="ar a" style="top:1368px">Heap_of_Dry_Beach_Sand_BaseColor.png</div><div class="ar f" style="top:1368px">Found</div>
<div class="ar a" style="top:1397px">Heap_of_Dry_Beach_Sand_Metallic.png</div><div class="ar f" style="top:1397px">Found</div>
</div>

<!-- Scene Explorer window -->
<div class="L">
<div class="b" style="left:8px;top:875px;width:579px;height:565px;background:#3c3c3c;border-radius:10px;box-shadow:0 0 8px rgba(0,0,0,.5)"></div>
<div class="b" style="left:10px;top:877px;width:575px;height:43px;background:#f3f3f3;border-radius:10px 10px 0 0"></div>
<div class="b" style="left:10px;top:920px;width:575px;height:480px;background:#454545"></div>
<div class="b" style="left:14px;top:957px;width:225px;height:31px;background:#474747;border:1px solid #666;box-sizing:border-box"></div>
<div class="b" style="left:276px;top:954px;width:36px;height:36px;background:#5a8ac6"></div>
<div class="b" style="left:315px;top:955px;width:1.5px;height:34px;background:#2a2a2a"></div>
<div class="b" style="left:40px;top:993px;width:480px;height:23px;background:#404040;border:1px solid #333;box-sizing:border-box"></div>
<div class="b" style="left:522px;top:993px;width:34px;height:23px;background:#404040;border:1px solid #333;box-sizing:border-box"></div>
<div class="b" style="left:558px;top:993px;width:27px;height:23px;background:#404040;border:1px solid #333;box-sizing:border-box"></div>
<div class="b" style="left:10px;top:996px;width:27px;height:28px;background:#5a8ac6"></div>
<div class="b" style="left:10px;top:1027px;width:27px;height:28px;background:#5a8ac6"></div>
<div class="b" style="left:10px;top:1058px;width:27px;height:28px;background:#5a8ac6"></div>
<div class="b" style="left:10px;top:1089px;width:27px;height:28px;background:#5a8ac6"></div>
<div class="b" style="left:10px;top:1120px;width:27px;height:28px;background:#5a8ac6"></div>
<div class="b" style="left:10px;top:1151px;width:27px;height:28px;background:#5a8ac6"></div>
<div class="b" style="left:10px;top:1182px;width:27px;height:28px;background:#5a8ac6"></div>
<div class="b" style="left:10px;top:1213px;width:27px;height:28px;background:#5a8ac6"></div>
<div class="b" style="left:10px;top:1244px;width:27px;height:28px;background:#5a8ac6"></div>
<div class="b" style="left:10px;top:1275px;width:27px;height:28px;background:#5a8ac6"></div>
<div class="b" style="left:10px;top:1306px;width:27px;height:28px;background:#5a8ac6"></div>
<div class="b" style="left:10px;top:1337px;width:27px;height:28px;background:#5a8ac6"></div>
<div class="b" style="left:558px;top:1017px;width:27px;height:356px;background:#f0f0f0"></div>
<div class="b" style="left:566px;top:1044px;width:11px;height:41px;background:#8a8a8a"></div>
<!-- rows bg -->
<div class="b" style="left:106px;top:1018px;width:452px;height:26px;background:#4e4e4e"></div>
<div class="b" style="left:106px;top:1044px;width:452px;height:26px;background:linear-gradient(90deg,#2f4a8e,#565a66 90%)"></div>
<div class="b" style="left:124px;top:1070px;width:434px;height:26px;background:#505050"></div>
<div class="b" style="left:124px;top:1096px;width:434px;height:26px;background:#5c5c5c"></div>
<div class="b" style="left:124px;top:1122px;width:434px;height:26px;background:#505050"></div>
<div class="b" style="left:124px;top:1148px;width:434px;height:26px;background:#5c5c5c"></div>
<div class="b" style="left:124px;top:1174px;width:434px;height:26px;background:#505050"></div>
<div class="b" style="left:124px;top:1200px;width:434px;height:26px;background:#5c5c5c"></div>
<div class="b" style="left:124px;top:1226px;width:434px;height:26px;background:#505050"></div>
<div class="b" style="left:124px;top:1252px;width:434px;height:26px;background:#5c5c5c"></div>
<div class="b" style="left:124px;top:1278px;width:434px;height:26px;background:#505050"></div>
<div class="b" style="left:124px;top:1304px;width:434px;height:26px;background:#5c5c5c"></div>
<div class="b" style="left:124px;top:1330px;width:434px;height:26px;background:#505050"></div>
<div class="b" style="left:124px;top:1356px;width:434px;height:26px;background:#5c5c5c"></div>
<svg class="L" viewBox="0 0 2689 1513" width="2689" height="1513">
<path d="M411 898H426" stroke="#9a9a9a" stroke-width="1.4"/>
<rect x="473" y="891" width="14" height="15" rx="1" fill="none" stroke="#9a9a9a" stroke-width="1.8"/>
<path d="M544 890 558 906M558 890 544 906" stroke="#9a9a9a" stroke-width="1.5"/>
<rect x="22" y="886" width="22" height="23" fill="url(#tm)"/>
<path d="M249 965 263 979M263 965 249 979" stroke="#a8a8a8" stroke-width="4"/>
<path d="M283 961H305L296 975V987L291 984V975Z" fill="#d0d0d0"/><path d="M294 977H305M294 977 300 973M294 977 300 981" stroke="#3cc0c0" stroke-width="2.5"/>
<path d="M330 970V966C330 958 342 958 342 966V970" fill="none" stroke="#d0d0d0" stroke-width="2.4"/><rect x="328" y="969" width="16" height="13" rx="1" fill="#d0d0d0"/>
<path d="M361 971H379M369 962V981" stroke="#cfcfcf" stroke-width="4"/><use href="#lay" x="373" y="970" width="12" height="13" fill="#f0a818"/>
<use href="#lay" x="397" y="961" width="22" height="22" fill="#3cc0c0"/><path d="M397 962l10 5 10-5" fill="none" stroke="#d0d0d0" stroke-width="2"/>
<rect x="434" y="962" width="14" height="8" fill="#cfcfcf"/><path d="M442 970V980H448M442 974H448" stroke="#3cc0c0" stroke-width="2" fill="none"/><rect x="449" y="971" width="5" height="6" fill="#3cc0c0"/><rect x="449" y="978" width="5" height="5" fill="#3cc0c0"/>
<use href="#lay" x="470" y="961" width="21" height="22" fill="#cfcfcf"/><path d="M470 966 480 961 491 966 480 972Z" fill="#3cc0c0"/>
<use href="#eye" x="505" y="962" width="20" height="13"/><use href="#lay" x="516" y="971" width="11" height="12" fill="#f0a818"/>
<g stroke="#cfcfcf" stroke-width="1.8"><path d="M551 961V981M543 966 559 976M559 966 543 976"/></g><use href="#lay" x="552" y="972" width="11" height="12" fill="#f0a818"/>
<path d="M512 1008 519 1008 515.5 1002Z" fill="#f0f0f0"/>
<!-- left strip icons -->
<circle cx="24" cy="1010" r="7.5" fill="#cfcfcf" stroke="#333"/>
<circle cx="21" cy="1038" r="7" fill="#5a8ac6" stroke="#cfcfcf" stroke-width="1.5"/><rect x="22" y="1038" width="11" height="12" fill="#cfcfcf" stroke="#333"/>
<path d="M24 1062C14 1062 16 1074 20 1077V1082H28V1077C32 1074 34 1062 24 1062Z" fill="#cfcfcf" stroke="#333"/>
<rect x="14" y="1097" width="17" height="13" rx="2" fill="#cfcfcf"/><path d="M31 1103 34 1098V1110L31 1106Z" fill="#cfcfcf"/>
<path d="M14 1127V1144H34ZM18 1136V1141H24Z" fill="#cfcfcf" fill-rule="evenodd" stroke="#333"/>
<path d="M13 1158Q18 1154 24 1158T35 1158M13 1165Q18 1161 24 1165T35 1165M13 1172Q18 1168 24 1172T35 1172" fill="none" stroke="#d0d0d0" stroke-width="1.8"/>
<rect x="15" y="1186" width="18" height="19" fill="#3c3c3c" stroke="#3cc0c0"/><circle cx="22" cy="1193" r="5" fill="#cfcfcf"/><rect x="23" y="1195" width="8" height="8" fill="#cfcfcf" stroke="#333"/>
<circle cx="24" cy="1226" r="9.5" fill="#cfcfcf" stroke="#333"/><path d="M20 1222H28V1228H31L24 1235 17 1228H20Z" fill="#3cc0c0"/>
<circle cx="17" cy="1252" r="3" fill="#d8d8d8"/><path d="M19 1254 33 1267" stroke="#e0e0e0" stroke-width="4.5"/>
<path d="M14 1281H34M15 1286H33V1297H15ZM18 1289H30" fill="#cfcfcf" stroke="#cfcfcf" stroke-width="1.8"/>
<path d="M24 1310V1330M15 1315 33 1325M33 1315 15 1325" stroke="#d8d8d8" stroke-width="3.2"/>
<use href="#eye" x="13" y="1345" width="22" height="13"/>
<path d="M12 1370H35" stroke="#2a2a2a" stroke-width="1.5"/>
<path d="M68 1065V1373" stroke="#6a6a6a" stroke-dasharray="1 2"/><path d="M50 1030V1046" stroke="#6a6a6a" stroke-dasharray="1 2"/>
<!-- tree icons -->
<use href="#eye" x="60" y="1023" width="21" height="14"/>
<use href="#lay" x="82" y="1019" width="22" height="22" fill="#3cc0c0"/>
<path d="M41 1051H58L49.5 1060Z" fill="#fff"/>
<use href="#eye" x="60" y="1049" width="21" height="14"/>
<use href="#lay" x="82" y="1045" width="22" height="22" fill="#333"/>
<g><use href="#eye" x="78" y="1075" width="21" height="14"/><circle cx="111" cy="1082" r="7" fill="#d0d0d0"/>
<use href="#eye" x="78" y="1101" width="21" height="14"/><circle cx="111" cy="1108" r="7" fill="#d0d0d0"/>
<use href="#eye" x="78" y="1127" width="21" height="14"/><circle cx="111" cy="1134" r="7" fill="#d0d0d0"/>
<use href="#eye" x="78" y="1153" width="21" height="14"/><circle cx="111" cy="1160" r="7" fill="#d0d0d0"/>
<use href="#eye" x="78" y="1179" width="21" height="14"/><circle cx="111" cy="1186" r="7" fill="#d0d0d0"/>
<use href="#eye" x="78" y="1205" width="21" height="14"/><circle cx="111" cy="1212" r="7" fill="#d0d0d0"/>
<use href="#eye" x="78" y="1231" width="21" height="14"/><circle cx="111" cy="1238" r="7" fill="#d0d0d0"/>
<use href="#eye" x="78" y="1257" width="21" height="14"/><circle cx="111" cy="1264" r="7" fill="#d0d0d0"/>
<use href="#eye" x="78" y="1283" width="21" height="14"/><circle cx="111" cy="1290" r="7" fill="#d0d0d0"/>
<use href="#eye" x="78" y="1309" width="21" height="14"/><circle cx="111" cy="1316" r="7" fill="#d0d0d0"/>
<use href="#eye" x="78" y="1335" width="21" height="14"/><circle cx="111" cy="1342" r="7" fill="#d0d0d0"/>
<use href="#eye" x="78" y="1361" width="21" height="14"/><circle cx="111" cy="1368" r="7" fill="#d0d0d0"/></g>
<g><use href="#flk" x="531" y="1021" width="19" height="19"/><use href="#flk" x="531" y="1047" width="19" height="19"/><use href="#flk" x="531" y="1073" width="19" height="19"/><use href="#flk" x="531" y="1099" width="19" height="19"/><use href="#flk" x="531" y="1125" width="19" height="19"/><use href="#flk" x="531" y="1151" width="19" height="19"/><use href="#flk" x="531" y="1177" width="19" height="19"/><use href="#flk" x="531" y="1203" width="19" height="19"/><use href="#flk" x="531" y="1229" width="19" height="19"/><use href="#flk" x="531" y="1255" width="19" height="19"/><use href="#flk" x="531" y="1281" width="19" height="19"/><use href="#flk" x="531" y="1307" width="19" height="19"/><use href="#flk" x="531" y="1333" width="19" height="19"/><use href="#flk" x="531" y="1359" width="19" height="19"/></g>
</svg>
<div class="t" style="left:27px;top:885px;color:#1d7f86;font-weight:bold;font-size:18px">3</div>
<div class="t" style="left:50px;top:886px;color:#8a8a8a;font-size:17.5px">Scene Explorer - Layer Explorer</div>
<div class="t" style="left:27px;top:926px;color:#e8e8e8;font-size:17px">Select</div>
<div class="t" style="left:98px;top:926px;color:#e8e8e8;font-size:17px">Display</div>
<div class="t" style="left:180px;top:926px;color:#e8e8e8;font-size:17px">Edit</div>
<div class="t" style="left:233px;top:926px;color:#e8e8e8;font-size:17px">Customize</div>
<div class="t" style="left:44px;top:994px;color:#e4e4e4;font-size:16px">Name (Sorted Ascending)</div>
<div class="t" style="left:526px;top:994px;color:#e4e4e4;font-size:16px">F...</div>
<div class="t" style="left:562px;top:994px;color:#e4e4e4;font-size:16px">R...</div>
<div class="lr" style="left:110px;top:1018px">0 (default)</div>
<div class="lr" style="left:110px;top:1044px;font-size:15.6px">Les_Braves_Memorial_with_Allied_Flags_and_Flowers</div>
<div class="lr" style="top:1070px">bud</div>
<div class="lr" style="top:1096px">bud001</div>
<div class="lr" style="top:1122px">bud002</div>
<div class="lr" style="top:1148px">bud003</div>
<div class="lr" style="top:1174px">bud004</div>
<div class="lr" style="top:1200px">bud005</div>
<div class="lr" style="top:1226px;font-size:15.3px">Flag_Canada</div>
<div class="lr" style="top:1252px;font-size:15.3px">Flag_France</div>
<div class="lr" style="top:1278px;font-size:15.6px">leaf_001</div>
<div class="lr" style="top:1304px;font-size:15.6px">leaf_002</div>
<div class="lr" style="top:1330px;font-size:15.6px">leaf_003</div>
<div class="lr" style="top:1356px;font-size:15.6px">leaf_004</div>
<div class="b" style="left:40px;top:1373px;width:545px;height:26px;background:#f0f0f0"></div>
<div class="b" style="left:10px;top:1373px;width:30px;height:27px;background:#454545"></div>
<div class="b" style="left:66px;top:1381px;width:291px;height:11px;background:#8a8a8a"></div>
<div class="b" style="left:14px;top:1404px;width:218px;height:30px;background:#404040;border:1px solid #666;box-sizing:border-box"></div>
<div class="b" style="left:252px;top:1401px;width:36px;height:36px;background:#5a8ac6"></div>
<div class="b" style="left:249px;top:1402px;width:1.5px;height:35px;background:#222"></div>
<div class="b" style="left:327px;top:1402px;width:1.5px;height:35px;background:#222"></div>
<svg class="L" viewBox="0 0 2689 1513" width="2689" height="1513" style="pointer-events:none">
<path d="M236 1417H243L239.5 1422Z" fill="#ddd"/>
<use href="#lay" x="259" y="1407" width="23" height="24" fill="#d8d8d8"/>
<rect x="299" y="1409" width="15" height="8" fill="#cfcfcf"/><path d="M306 1417V1421M300 1425V1421H313V1425" stroke="#cfcfcf" stroke-width="1.5" fill="none"/><rect x="297" y="1425" width="7" height="6" fill="#cfcfcf"/><rect x="309" y="1425" width="7" height="6" fill="#cfcfcf"/>
<path d="M20 1385 26 1393 20 1400M26 1385 32 1393 26 1400" fill="none" stroke="#4a4a8a" stroke-width="2"/>
<path d="M572 1404 578 1410 572 1416M578 1404 584 1410 578 1416" fill="none" stroke="#4a4a8a" stroke-width="2"/>
</svg>
<div class="t" style="left:16px;top:1408px;color:#e8e800;font-size:17.5px">Layer Explorer</div>
<div class="t" style="left:335px;top:1408px;color:#e8e8e8;font-size:17px">Selection Set:</div>
</div>
</body></html>
